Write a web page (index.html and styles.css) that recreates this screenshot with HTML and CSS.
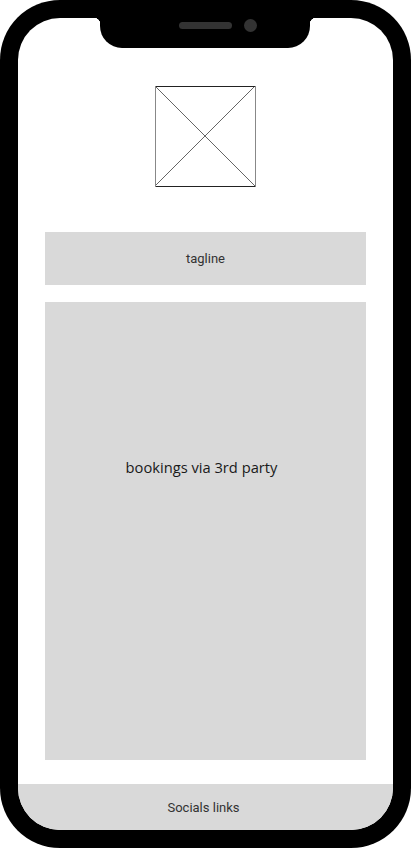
FILE: index.html
```html
<!DOCTYPE html>
<html>
<head>
<meta charset="utf-8">
<link rel="stylesheet" href="styles.css">
</head>
<body>
<div class="phone">
  <div class="screen">
    <div class="logo">
      <svg width="101" height="101" viewBox="0 0 101 101">
        <line x1="0" y1="0" x2="100" y2="100" stroke="#666" stroke-width="1"/>
        <line x1="100" y1="0" x2="0" y2="100" stroke="#666" stroke-width="1"/>
        <line x1="0" y1="0.5" x2="101" y2="0.5" stroke="#222" stroke-width="1"/>
        <line x1="0" y1="100.5" x2="101" y2="100.5" stroke="#222" stroke-width="1"/>
        <line x1="0.5" y1="0" x2="0.5" y2="101" stroke="#888" stroke-width="1"/>
        <line x1="100.5" y1="0" x2="100.5" y2="101" stroke="#888" stroke-width="1"/>
      </svg>
    </div>
    <div class="tagline">tagline</div>
    <div class="bookings">bookings via 3rd party</div>
    <div class="footer">Socials links</div>
  </div>
  <div class="notch">
    <span class="speaker"></span>
    <span class="camera"></span>
  </div>
</div>
</body>
</html>
```

FILE: styles.css
```css
html, body {
  margin: 0;
  padding: 0;
  background: #fff;
}
.phone {
  position: relative;
  width: 411px;
  height: 848px;
  box-sizing: border-box;
  padding: 18px;
  background: #000;
  border-radius: 60px;
}
.screen {
  width: 375px;
  height: 812px;
  background: #fff;
  border-radius: 42px;
  overflow: hidden;
  display: flex;
  flex-direction: column;
  align-items: center;
}
.logo {
  margin-top: 68px;
  width: 101px;
  height: 101px;
}
.logo svg {
  display: block;
}
.tagline {
  margin-top: 45px;
  width: 321px;
  height: 53px;
  background: #d9d9d9;
  display: flex;
  align-items: center;
  justify-content: center;
  font-family: Roboto, "Liberation Sans", sans-serif;
  font-size: 13px;
  color: #333;
}
.bookings {
  margin-top: 17px;
  width: 321px;
  height: 458px;
  background: #d9d9d9;
  display: flex;
  align-items: flex-start;
  justify-content: center;
  padding: 155px 8px 0 0;
  line-height: 20px;
  font-family: "Open Sans", "Liberation Sans", sans-serif;
  font-size: 14.7px;
  color: #1a1a1a;
  box-sizing: border-box;
}
.footer {
  margin-top: auto;
  width: 100%;
  height: 46px;
  background: #d9d9d9;
  display: flex;
  align-items: center;
  justify-content: center;
  font-family: Roboto, "Liberation Sans", sans-serif;
  font-size: 13px;
  color: #333;
  padding-right: 4px;
  box-sizing: border-box;
}
.notch {
  position: absolute;
  top: 18px;
  left: 100px;
  width: 210px;
  height: 30px;
  background: #000;
  border-radius: 0 0 22px 22px;
}
.notch::before,
.notch::after {
  content: "";
  position: absolute;
  top: 0;
  width: 6px;
  height: 6px;
}
.notch::before {
  left: -6px;
  background: radial-gradient(circle at 0 100%, transparent 6px, #000 6.5px);
}
.notch::after {
  right: -6px;
  background: radial-gradient(circle at 100% 100%, transparent 6px, #000 6.5px);
}
.speaker {
  position: absolute;
  left: 79px;
  top: 4px;
  width: 53px;
  height: 7px;
  border-radius: 4px;
  background: #333;
}
.camera {
  position: absolute;
  left: 144px;
  top: 1px;
  width: 13px;
  height: 13px;
  border-radius: 50%;
  background: #333;
}
```
